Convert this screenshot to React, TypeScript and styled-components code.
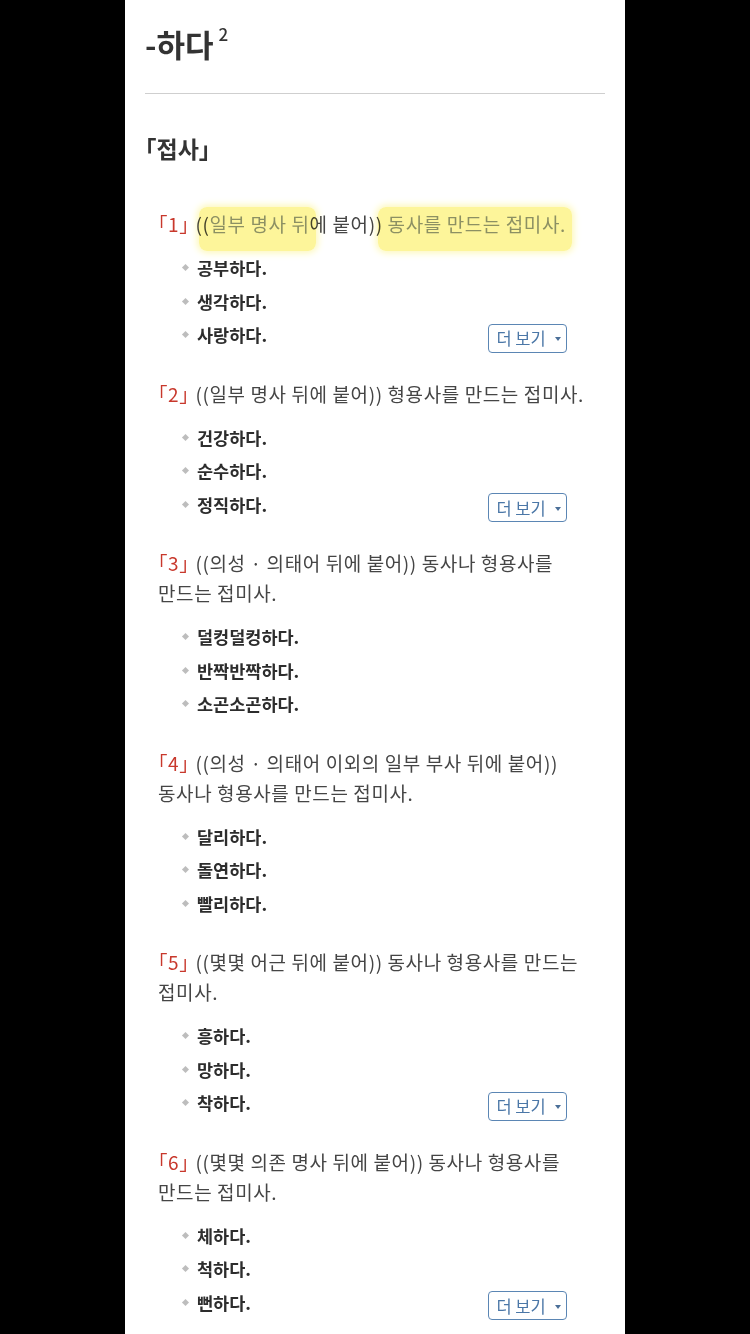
import React from 'react'
import styled, { createGlobalStyle } from 'styled-components'

const GlobalStyle = createGlobalStyle`
  html, body {
    margin: 0;
    padding: 0;
    background: #000;
  }
  body {
    font-family: 'Noto Sans CJK KR', 'Noto Sans', sans-serif;
  }
`

const Page = styled.div`
  width: 500px;
  min-height: 1334px;
  margin: 0 auto;
  background: #fff;
  padding: 0 20px;
  box-sizing: border-box;
  overflow: hidden;
`

const Title = styled.h1`
  margin: 0;
  padding-top: 22px;
  font-size: 31px;
  line-height: 44px;
  font-weight: 700;
  color: #333;
  sup {
    font-size: 17px;
    font-weight: 500;
    margin-left: 5px;
    vertical-align: 16px;
    line-height: 0;
  }
`

const Divider = styled.hr`
  margin: 27px 0 0;
  border: none;
  border-top: 1px solid #cfcfcf;
`

const Part = styled.h2`
  margin: 37px 0 0;
  font-size: 23px;
  line-height: 34px;
  font-weight: 700;
  color: #333;
  font-feature-settings: 'halt';
`

const Sense = styled.section`
  margin-top: 44px;
  & + & {
    margin-top: 27px;
  }
`

const Definition = styled.p`
  margin: 0;
  padding: 0 8px 0 13px;
  font-size: 19px;
  line-height: 30px;
  letter-spacing: 0.6px;
  color: #454545;
  word-break: keep-all;
`

const Num = styled.span`
  color: #c8382c;
  font-feature-settings: 'halt';
  margin-right: 6px;
`

const Marker = styled.span`
  color: #8c9063;
  background: #fdf59a;
  border-radius: 8px;
  padding: 3px 6px 14px 10px;
  margin: 0 -6px 0 -10px;
  box-shadow: 0 0 7px 2px #fdf8b8;
  mix-blend-mode: multiply;
`

const Examples = styled.ul`
  list-style: none;
  margin: 12px 0 0;
  padding: 0 0 0 35px;
`

const Example = styled.li`
  display: flex;
  align-items: center;
  height: 33.5px;
  font-size: 17.5px;
  font-weight: 700;
  color: #2d2d2d;
`

const Bullet = styled.span`
  width: 5px;
  height: 5px;
  background: #bdbdbd;
  transform: rotate(45deg);
  margin: 0 9px 0 3px;
  flex: none;
`

const MoreButton = styled.button`
  margin-left: auto;
  margin-right: 38px;
  margin-top: 7px;
  width: 79px;
  height: 29px;
  box-sizing: border-box;
  border: 1.5px solid #5b86b4;
  border-radius: 4px;
  background: #fff;
  color: #4b77a7;
  font-family: inherit;
  font-size: 16.5px;
  font-weight: 400;
  display: flex;
  align-items: center;
  justify-content: center;
  gap: 9px;
  padding: 0 0 0 2px;
  &::after {
    content: '';
    border-left: 3.5px solid transparent;
    border-right: 3.5px solid transparent;
    border-top: 4px solid #4b6f98;
    margin-top: 2px;
  }
`

type Def = {
  num: number
  body: React.ReactNode
  examples: string[]
  more?: boolean
}

const senses: Def[] = [
  {
    num: 1,
    body: (
      <>
        ((<Marker>일부 명사 뒤</Marker>에 붙어)) <Marker>동사를 만드는 접미사.</Marker>
      </>
    ),
    examples: ['공부하다.', '생각하다.', '사랑하다.'],
    more: true,
  },
  {
    num: 2,
    body: '((일부 명사 뒤에 붙어)) 형용사를 만드는 접미사.',
    examples: ['건강하다.', '순수하다.', '정직하다.'],
    more: true,
  },
  {
    num: 3,
    body: '((의성 · 의태어 뒤에 붙어)) 동사나 형용사를 만드는 접미사.',
    examples: ['덜컹덜컹하다.', '반짝반짝하다.', '소곤소곤하다.'],
  },
  {
    num: 4,
    body: '((의성 · 의태어 이외의 일부 부사 뒤에 붙어)) 동사나 형용사를 만드는 접미사.',
    examples: ['달리하다.', '돌연하다.', '빨리하다.'],
  },
  {
    num: 5,
    body: '((몇몇 어근 뒤에 붙어)) 동사나 형용사를 만드는 접미사.',
    examples: ['흥하다.', '망하다.', '착하다.'],
    more: true,
  },
  {
    num: 6,
    body: '((몇몇 의존 명사 뒤에 붙어)) 동사나 형용사를 만드는 접미사.',
    examples: ['체하다.', '척하다.', '뻔하다.'],
    more: true,
  },
]

export default function App() {
  return (
    <Page>
      <GlobalStyle />
      <Title>
        -하다<sup>2</sup>
      </Title>
      <Divider />
      <Part>「접사」</Part>
      {senses.map((s) => (
        <Sense key={s.num}>
          <Definition>
            <Num>「{s.num}」</Num>
            {s.body}
          </Definition>
          <Examples>
            {s.examples.map((ex, i) => (
              <Example key={ex}>
                <Bullet />
                {ex}
                {s.more && i === s.examples.length - 1 && <MoreButton>더 보기</MoreButton>}
              </Example>
            ))}
          </Examples>
        </Sense>
      ))}
    </Page>
  )
}
